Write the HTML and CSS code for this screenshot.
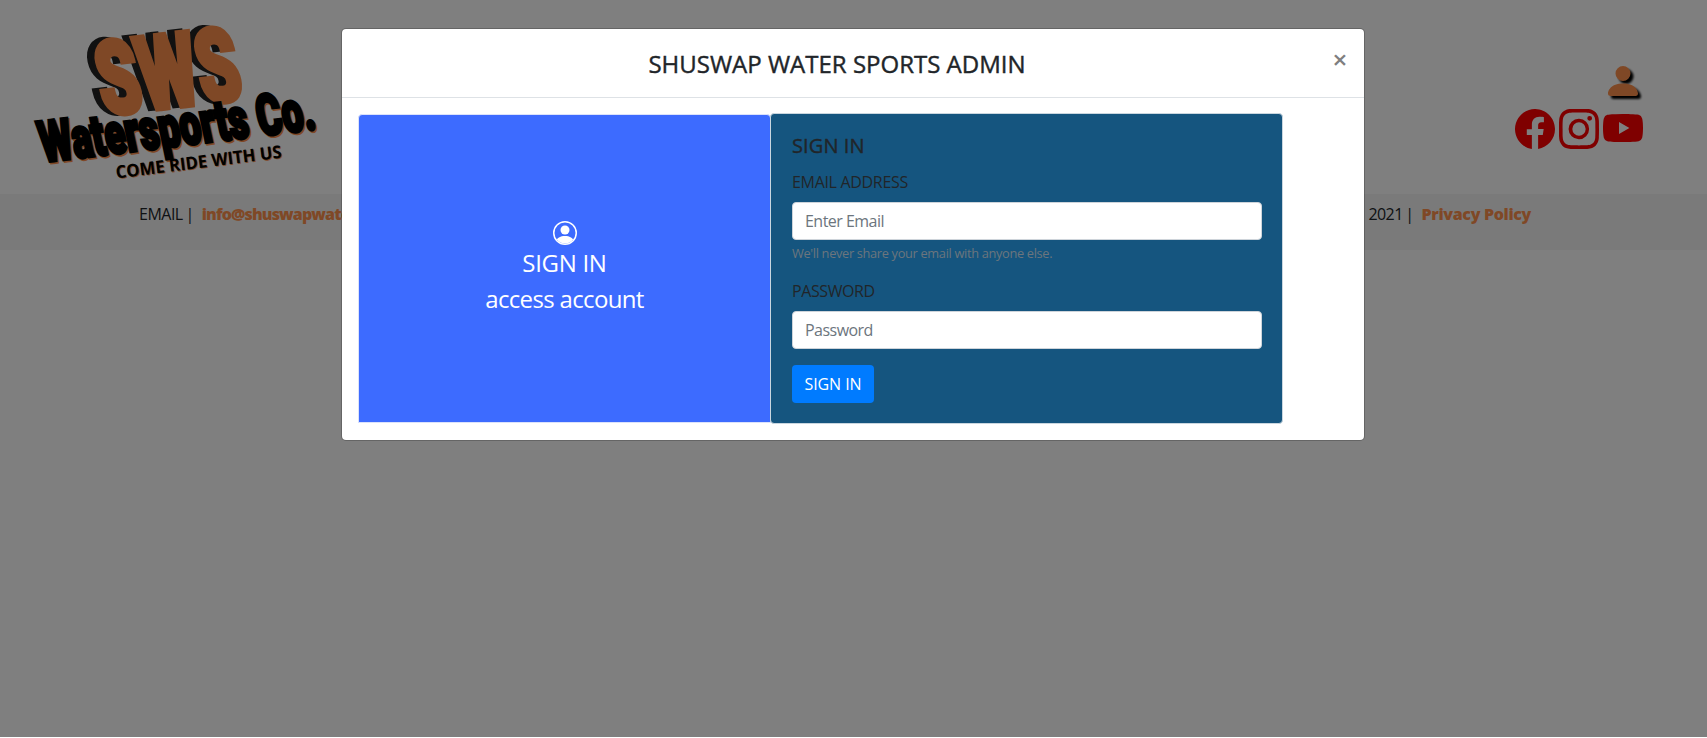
FILE: index.html
```html
<!DOCTYPE html>
<html lang="en">
<head>
<meta charset="utf-8">
<title>Shuswap Water Sports</title>
<link rel="stylesheet" href="styles.css">
</head>
<body>
<header class="site-header">
  <svg class="logo" width="310" height="184" viewBox="20 5 310 184" role="img" aria-label="SWS Watersports Co.">
    <g class="logo-sws">
      <g transform="translate(97 114.500) rotate(-6.800) skewX(5)">
        <text class="sws-shade" x="0" y="0" textLength="142" lengthAdjust="spacingAndGlyphs">SWS</text>
      </g>
      <g transform="translate(104.500 115) rotate(-6.800) skewX(5)">
        <text class="sws-face" x="0" y="0" textLength="142" lengthAdjust="spacingAndGlyphs">SWS</text>
      </g>
    </g>
    <g class="logo-name">
      <g transform="translate(45 163.500) rotate(-6.900) skewX(5)">
        <text class="name-shade" x="0" y="0" textLength="276" lengthAdjust="spacingAndGlyphs">Watersports Co.</text>
      </g>
      <g transform="translate(43.500 162) rotate(-6.900) skewX(5)">
        <text class="name-face" x="0" y="0" textLength="276" lengthAdjust="spacingAndGlyphs">Watersports Co.</text>
      </g>
    </g>
    <g transform="translate(116.500 178.500) rotate(-7.200)">
      <text class="tag-shade" x="1" y="1" textLength="167" lengthAdjust="spacingAndGlyphs">COME RIDE WITH US</text>
      <text class="tag-face" x="0" y="0" textLength="167" lengthAdjust="spacingAndGlyphs">COME RIDE WITH US</text>
    </g>
  </svg>
  <div class="header-links">
    <svg class="user-icon" viewBox="0 0 16 16"><path d="M3 14s-1 0-1-1 1-4 6-4 6 3 6 4-1 1-1 1H3zm5-6a3 3 0 1 0 0-6 3 3 0 0 0 0 6z"/></svg>
    <div class="social">
      <svg viewBox="0 0 16 16"><path d="M16 8.049c0-4.446-3.582-8.05-8-8.05C3.580 0-.002 3.603-.002 8.050c0 4.017 2.926 7.347 6.750 7.951v-5.625h-2.030V8.050H6.750V6.275c0-2.017 1.195-3.131 3.022-3.131.876 0 1.791.157 1.791.157v1.980h-1.009c-.993 0-1.303.621-1.303 1.258v1.510h2.218l-.354 2.326H9.250V16c3.824-.604 6.750-3.934 6.750-7.951z"/></svg>
      <svg viewBox="0 0 16 16"><path d="M8 0C5.829 0 5.556.01 4.703.048 3.850.088 3.269.222 2.760.420a3.917 3.917 0 0 0-1.417.923A3.927 3.927 0 0 0 .420 2.760C.222 3.268.087 3.850.048 4.700.01 5.555 0 5.827 0 8.001c0 2.172.01 2.444.048 3.297.04.852.174 1.433.372 1.942.205.526.478.972.923 1.417.444.445.890.719 1.416.923.510.198 1.090.333 1.942.372C5.555 15.990 5.827 16 8 16s2.444-.01 3.298-.048c.851-.04 1.434-.174 1.943-.372a3.916 3.916 0 0 0 1.416-.923c.445-.445.718-.891.923-1.417.197-.509.332-1.090.372-1.942C15.990 10.445 16 10.173 16 8s-.01-2.445-.048-3.299c-.04-.851-.175-1.433-.372-1.941a3.926 3.926 0 0 0-.923-1.417A3.911 3.911 0 0 0 13.240.420c-.510-.198-1.092-.333-1.943-.372C10.443.01 10.172 0 7.998 0h.003zm-.717 1.442h.718c2.136 0 2.389.007 3.232.046.780.035 1.204.166 1.486.275.373.145.640.319.920.599.280.280.453.546.598.920.110.281.240.705.275 1.485.039.843.047 1.096.047 3.231s-.008 2.389-.047 3.232c-.035.780-.166 1.203-.275 1.485a2.470 2.470 0 0 1-.599.919c-.280.280-.546.453-.920.598-.280.110-.704.240-1.485.276-.843.038-1.096.047-3.232.047s-2.390-.009-3.233-.047c-.780-.036-1.203-.166-1.485-.276a2.478 2.478 0 0 1-.920-.598 2.480 2.480 0 0 1-.600-.920c-.109-.281-.240-.705-.275-1.485-.038-.843-.046-1.096-.046-3.233 0-2.136.008-2.388.046-3.231.036-.780.166-1.204.276-1.486.145-.373.319-.640.599-.920.280-.280.546-.453.920-.598.282-.110.705-.240 1.485-.276.738-.034 1.024-.044 2.515-.045v.002zm4.988 1.328a.960.960 0 1 0 0 1.920.960.960 0 0 0 0-1.920zm-4.270 1.122a4.109 4.109 0 1 0 0 8.217 4.109 4.109 0 0 0 0-8.217zm0 1.441a2.667 2.667 0 1 1 0 5.334 2.667 2.667 0 0 1 0-5.334z"/></svg>
      <svg viewBox="0 0 16 16"><path d="M8.051 1.999h.089c.822.003 4.987.033 6.110.335a2.010 2.010 0 0 1 1.415 1.420c.101.380.172.883.220 1.402l.01.104.022.260.008.104c.065.914.073 1.770.074 1.957v.075c-.001.194-.01 1.108-.082 2.060l-.008.105-.009.104c-.050.572-.124 1.140-.235 1.558a2.007 2.007 0 0 1-1.415 1.420c-1.160.312-5.569.334-6.180.335h-.142c-.309 0-1.587-.006-2.927-.052l-.170-.006-.087-.004-.171-.007-.171-.007c-1.110-.049-2.167-.128-2.654-.260a2.007 2.007 0 0 1-1.415-1.419c-.111-.417-.185-.986-.235-1.558L.090 9.820l-.008-.104A31.400 31.400 0 0 1 0 7.680v-.123c.002-.215.01-.958.064-1.778l.007-.103.003-.052.008-.104.022-.260.01-.104c.048-.519.119-1.023.220-1.402a2.007 2.007 0 0 1 1.415-1.420c.487-.130 1.544-.210 2.654-.260l.170-.007.172-.006.086-.003.171-.007A99.788 99.788 0 0 1 7.858 2h.193zM6.400 5.209v4.818l4.157-2.408L6.400 5.209z"/></svg>
    </div>
  </div>
</header>
<div class="info-bar">
  <p class="contact"><span class="bar-label">EMAIL |</span><a class="bar-mail">info@shuswapwatersports.com</a></p>
  <p class="legal"><span class="bar-year">2021 |</span><a class="bar-policy">Privacy Policy</a></p>
</div>

<div class="backdrop">
  <section class="modal">
    <div class="modal-header">
      <h4 class="modal-title">SHUSWAP WATER SPORTS ADMIN</h4>
      <button class="close" aria-label="Close">×</button>
    </div>
    <div class="modal-body">
      <div class="access-card">
        <svg class="circle-icon" viewBox="0 0 16 16"><path d="M13.468 12.370C12.758 11.226 11.195 10 8 10s-4.757 1.225-5.468 2.370A6.987 6.987 0 0 0 8 15a6.987 6.987 0 0 0 5.468-2.630z"/><path fill-rule="evenodd" d="M8 9a3 3 0 1 0 0-6 3 3 0 0 0 0 6z"/><path fill-rule="evenodd" d="M8 1a7 7 0 1 0 0 14A7 7 0 0 0 8 1zM0 8a8 8 0 1 1 16 0A8 8 0 0 1 0 8z"/></svg>
        <span class="access-title">SIGN IN</span>
        <span class="access-sub">access account</span>
      </div>
      <form class="form-card">
        <h5 class="form-title">SIGN IN</h5>
        <div class="field">
          <label class="label-email" for="email">EMAIL ADDRESS</label>
          <input class="input-email" id="email" type="email" placeholder="Enter Email">
          <small class="hint">We'll never share your email with anyone else.</small>
        </div>
        <div class="field">
          <label class="label-pass" for="pass">PASSWORD</label>
          <input class="input-pass" id="pass" type="password" placeholder="Password">
        </div>
        <button class="submit" type="button">SIGN IN</button>
      </form>
    </div>
  </section>
</div>
</body>
</html>
```
FILE: styles.css
```css
* { box-sizing: border-box; }
html { background: #fff; overflow: hidden; }
body {
  margin: 0;
  font-family: "Open Sans", "Noto Sans", sans-serif;
  font-size: 16px;
  line-height: 24px;
  color: #212529;
}
h4, h5, p { margin: 0; }

.site-header {
  height: 194px;
  padding: 5px 64px 0 20px;
  display: flex;
  justify-content: space-between;
}
.logo { overflow: visible; font-family: Roboto, sans-serif; font-weight: 900; }
.logo-sws text { font-size: 102px; stroke-width: 6px; }
.sws-shade { fill: #222; stroke: #222; }
.sws-face { fill: #ff914d; stroke: #ff914d; }
.logo-name text { font-size: 57px; stroke-width: 3.5px; }
.name-shade { fill: #ff914d; stroke: #ff914d; }
.name-face { fill: #000; stroke: #000; }
.tag-shade, .tag-face { font-family: "Open Sans", sans-serif; font-weight: 700; font-size: 17.5px; }
.tag-shade { fill: #ff914d; }
.tag-face { fill: #000; }

.header-links {
  padding-top: 56px;
  display: flex;
  flex-direction: column;
  align-items: flex-end;
  gap: 8px;
}
.user-icon { width: 40px; height: 40px; fill: #ff914d; filter: drop-shadow(3px 3px 1px #000); }
.social { display: flex; gap: 4px; }
.social svg { width: 40px; height: 40px; fill: #f00; }

.info-bar {
  height: 56px;
  padding: 8px 176px 0 139px;
  display: flex;
  justify-content: space-between;
  background: #f5f5f5;
}
.info-bar p { display: flex; gap: 8px; }
.info-bar a { color: #ff914d; font-weight: 800; letter-spacing: -.33px; }
.info-bar .bar-mail { letter-spacing: -.85px; }
.bar-label { letter-spacing: -.5px; word-spacing: -1px; }
.bar-year { letter-spacing: -.6px; word-spacing: -1px; }

.backdrop {
  position: absolute;
  inset: 0 0 1px 0;
  padding: 28px 1px 0 0;
  display: flex;
  justify-content: center;
  align-items: flex-start;
  background: rgba(0, 0, 0, .5);
}
.modal {
  width: 1024px;
  border: 1px solid rgba(0, 0, 0, .2);
  border-radius: 5px;
  background: #fff;
  background-clip: padding-box;
}
.modal-header {
  height: 69px;
  padding: 16px;
  display: flex;
  border-bottom: 1px solid #dee2e6;
}
.modal-title {
  flex: 1;
  padding-top: 4px;
  text-align: center;
  font-size: 24px;
  font-weight: 500;
  line-height: 29px;
  -webkit-text-stroke: .4px currentColor;
}
.close {
  width: 48px;
  height: 60px;
  margin: -16px -16px 0 0;
  padding: 0;
  border: 0;
  background: none;
  font: 600 26px/24px "Open Sans", sans-serif;
  color: #7f7f7f;
}
.modal-body { padding: 15px 16px 16px; display: flex; align-items: center; }
.access-card {
  width: 413px;
  height: 309px;
  padding-top: 106px;
  display: flex;
  flex-direction: column;
  align-items: center;
  border: 1px solid #dbe2fb;
  border-radius: 4px 4px 0 0;
  background: #3d6bff;
  color: #fff;
  font-size: 24px;
  line-height: 36px;
}
.circle-icon { width: 24px; height: 24px; fill: #fff; }
.access-title { letter-spacing: -.3px; }
.access-sub { letter-spacing: -.65px; }
.form-card {
  width: 513px;
  height: 311px;
  margin-left: -1px;
  padding: 20px 20px 20px 21px;
  border: 1px solid #c9d6df;
  border-radius: 4px;
  background: #15557f;
}
.form-title {
  margin-bottom: 12px;
  font-size: 20px;
  font-weight: 500;
  line-height: 24px;
  letter-spacing: .1px;
  -webkit-text-stroke: .4px currentColor;
}
.field { margin-bottom: 16px; display: flex; flex-direction: column; align-items: stretch; }
.field label { margin-bottom: 8px; }
.label-email { letter-spacing: -.32px; }
.label-pass { letter-spacing: -.4px; }
.field input {
  width: 100%;
  height: 38px;
  padding: 6px 12px;
  border: 1px solid #ced4da;
  border-radius: 4px;
  background: #fff;
  font: inherit;
  letter-spacing: -.53px;
}
.field input::placeholder { color: #6c757d; opacity: 1; }
.hint { margin-top: 4px; font-size: 12.8px; line-height: 19px; letter-spacing: -.33px; color: #6c757d; }
.submit {
  width: 82px;
  height: 38px;
  padding: 0;
  border: 0;
  border-radius: 4px;
  background: #007bff;
  color: #fff;
  font: inherit;
  letter-spacing: -.1px;
}
```
